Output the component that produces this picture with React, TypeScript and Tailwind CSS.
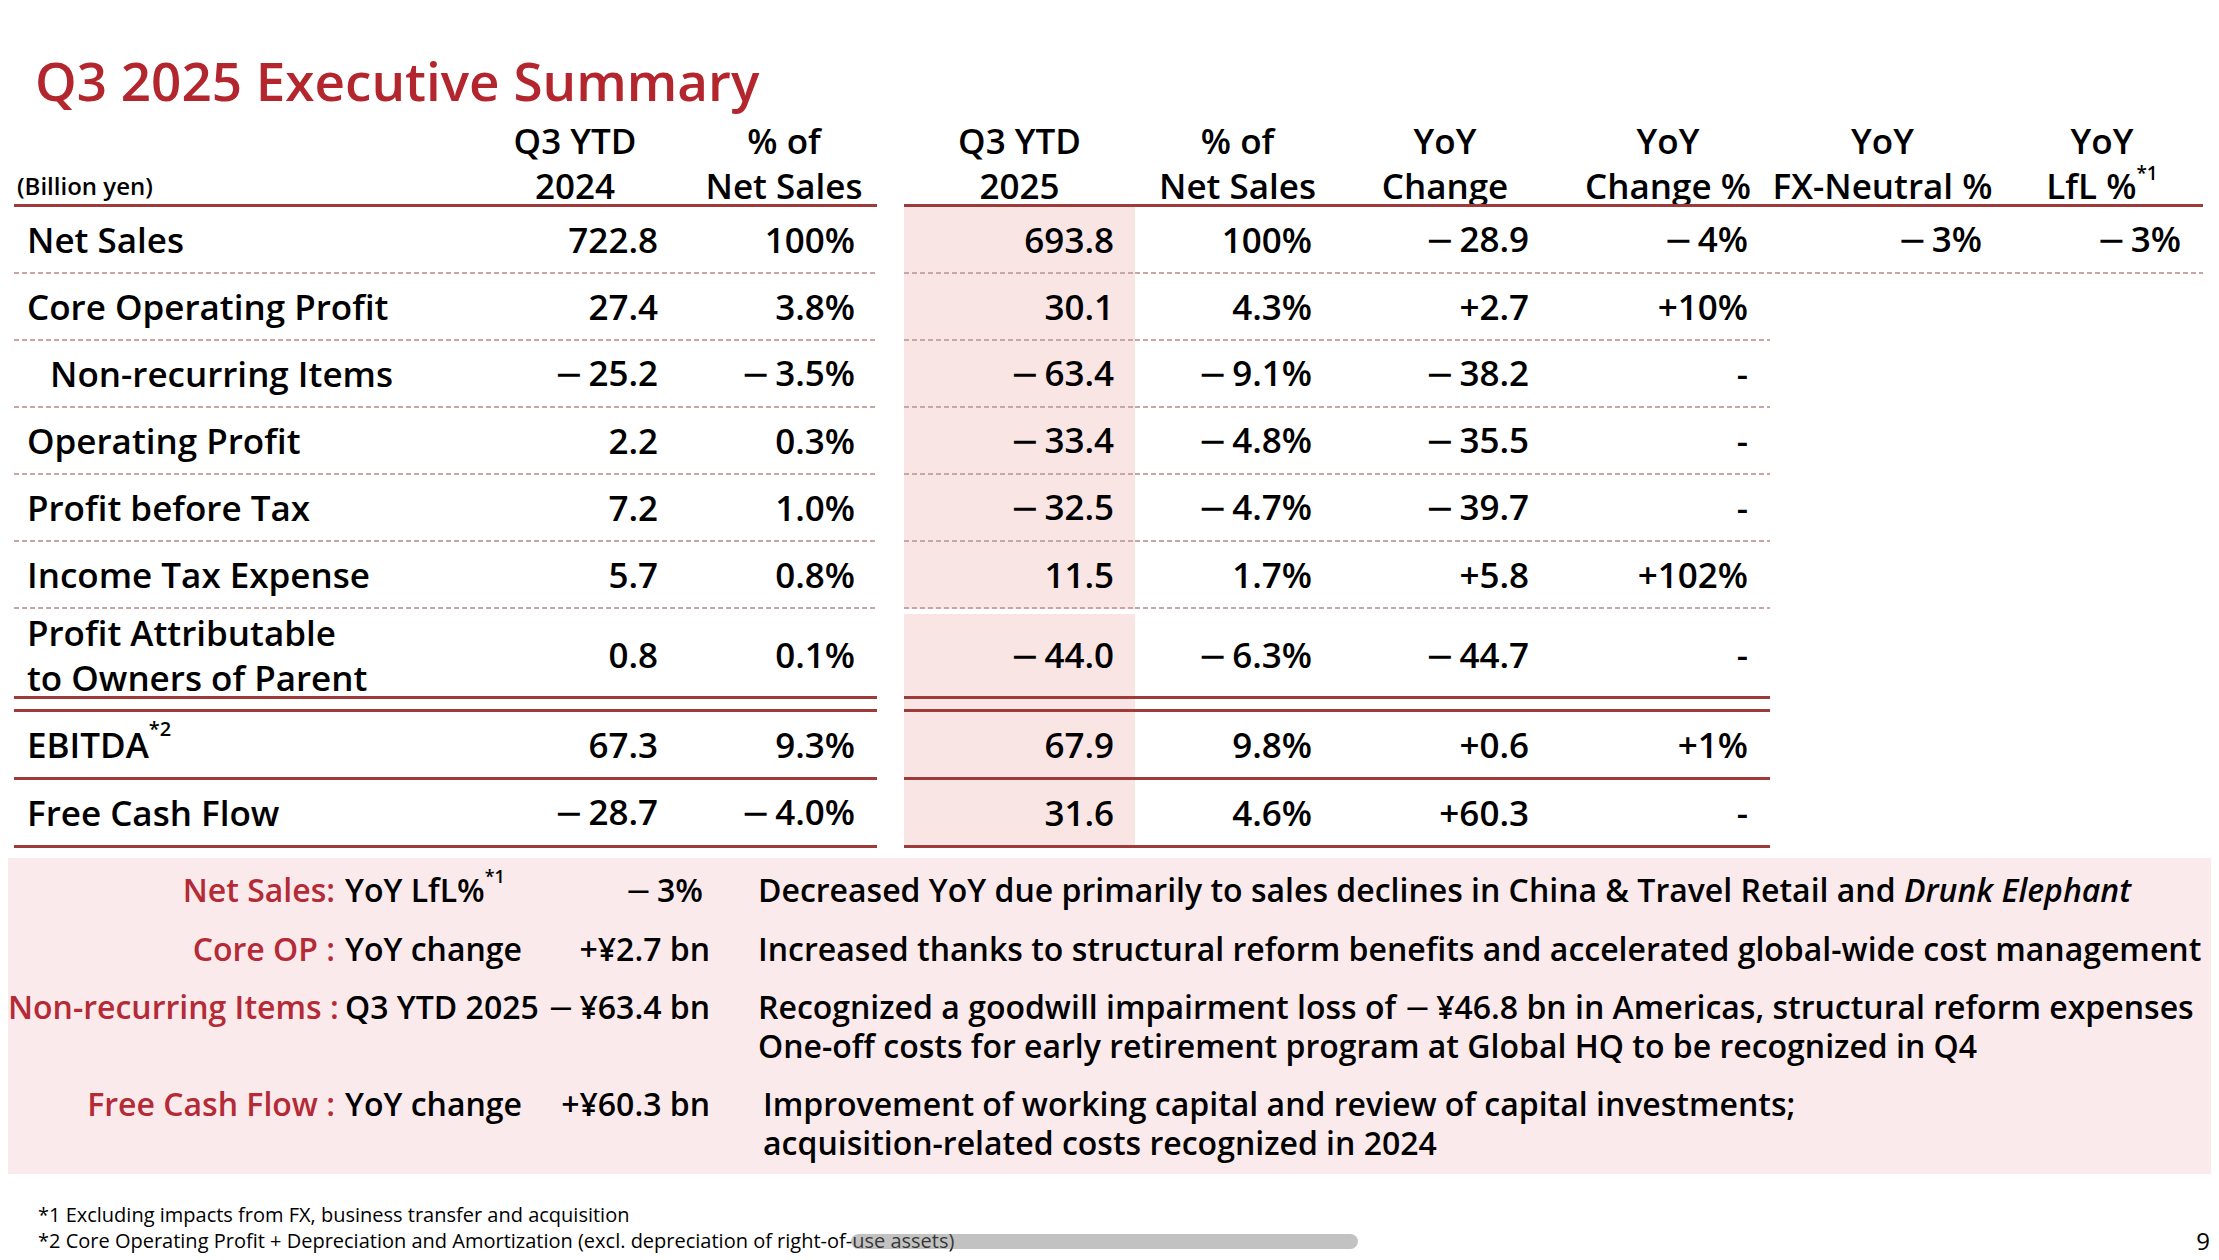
import React from "react";

const dashBg =
  "bg-[repeating-linear-gradient(90deg,#c9a5a5_0px,#c9a5a5_5px,transparent_5px,transparent_8px)]";

function Val({ v }: { v?: string }) {
  if (!v) return null;
  if (v.startsWith("−")) {
    return (
      <>
        <span className="font-['DejaVu_Sans'] font-normal mr-[5px]">−</span>
        {v.slice(1)}
      </>
    );
  }
  return <>{v}</>;
}

type Row = {
  label: React.ReactNode;
  indent?: boolean;
  tall?: boolean;
  a: string;
  b: string;
  c: string;
  d: string;
  e: string;
  f: string;
  g?: string;
  h?: string;
  sep: "dash" | "double" | "solid";
};

const rows: Row[] = [
  { label: "Net Sales", a: "722.8", b: "100%", c: "693.8", d: "100%", e: "−28.9", f: "−4%", g: "−3%", h: "−3%", sep: "dash" },
  { label: "Core Operating Profit", a: "27.4", b: "3.8%", c: "30.1", d: "4.3%", e: "+2.7", f: "+10%", sep: "dash" },
  { label: "Non-recurring Items", indent: true, a: "−25.2", b: "−3.5%", c: "−63.4", d: "−9.1%", e: "−38.2", f: "-", sep: "dash" },
  { label: "Operating Profit", a: "2.2", b: "0.3%", c: "−33.4", d: "−4.8%", e: "−35.5", f: "-", sep: "dash" },
  { label: "Profit before Tax", a: "7.2", b: "1.0%", c: "−32.5", d: "−4.7%", e: "−39.7", f: "-", sep: "dash" },
  { label: "Income Tax Expense", a: "5.7", b: "0.8%", c: "11.5", d: "1.7%", e: "+5.8", f: "+102%", sep: "dash" },
  {
    label: (
      <div className="leading-[45px]">
        <div>Profit Attributable</div>
        <div>to Owners of Parent</div>
      </div>
    ),
    tall: true,
    a: "0.8",
    b: "0.1%",
    c: "−44.0",
    d: "−6.3%",
    e: "−44.7",
    f: "-",
    sep: "double",
  },
  {
    label: (
      <>
        EBITDA<sup className="text-[20px] relative -top-[4px] align-top leading-none">*2</sup>
      </>
    ),
    a: "67.3",
    b: "9.3%",
    c: "67.9",
    d: "9.8%",
    e: "+0.6",
    f: "+1%",
    sep: "solid",
  },
  { label: "Free Cash Flow", a: "−28.7", b: "−4.0%", c: "31.6", d: "4.6%", e: "+60.3", f: "-", sep: "solid" },
];

function rowH(r: Row) {
  return r.tall ? "h-[87px] pt-[5px]" : "h-[65px]";
}

function LeftSep({ kind }: { kind: "dash" | "double" | "solid" }) {
  if (kind === "dash") return <div className={`h-[2px] w-full ${dashBg}`} />;
  if (kind === "solid") return <div className="h-[3px] w-full bg-[#9c3b3a]" />;
  return (
    <div className="flex flex-col">
      <div className="h-[3px] w-full bg-[#9c3b3a]" />
      <div className="h-[10px]" />
      <div className="h-[3px] w-full bg-[#9c3b3a]" />
    </div>
  );
}

function RightSep({ kind, full }: { kind: "dash" | "double" | "solid"; full?: boolean }) {
  const w = full ? "w-[1299px]" : "w-[866px]";
  if (kind === "dash")
    return (
      <div className={`flex h-[2px] ${w}`}>
        <div className={`w-[231px] bg-[#f9e5e4] ${dashBg}`} />
        <div className={`flex-1 ${dashBg}`} />
      </div>
    );
  if (kind === "solid") return <div className={`h-[3px] ${w} bg-[#9c3b3a]`} />;
  return (
    <div className={`flex flex-col ${w}`}>
      <div className="h-[3px] w-full bg-[#9c3b3a]" />
      <div className="flex h-[10px]">
        <div className="w-[231px] bg-[#f9e5e4]" />
        <div className="flex-1" />
      </div>
      <div className="h-[3px] w-full bg-[#9c3b3a]" />
    </div>
  );
}

function HeadCell({ w, l1, l2, extra = "" }: { w: string; l1: string; l2: React.ReactNode; extra?: string }) {
  return (
    <div className={`${w} ${extra} text-center text-[35px] leading-[45px] -mb-[4px] whitespace-nowrap`}>
      <div>{l1}</div>
      <div>{l2}</div>
    </div>
  );
}

function LeftBlock() {
  return (
    <div className="flex flex-col w-[863px] shrink-0">
      <div className="flex items-end h-[95px]">
        <div className="w-[456px] pl-[3px] text-[24px] leading-[45px] -mb-[4px]">(Billion yen)</div>
        <HeadCell w="w-[210px]" l1="Q3 YTD" l2="2024" />
        <HeadCell w="w-[197px]" l1="% of" l2="Net Sales" extra="pl-[11px]" />
      </div>
      <div className="h-[3px] bg-[#9c3b3a]" />
      {rows.map((r, i) => (
        <React.Fragment key={i}>
          <div className={`flex items-center ${rowH(r)} text-[35px] leading-[44px]`}>
            <div className={`w-[456px] ${r.indent ? "pl-[36px]" : "pl-[13px]"}`}>{r.label}</div>
            <div className="w-[210px] pr-[22px] text-right whitespace-nowrap">
              <Val v={r.a} />
            </div>
            <div className="w-[197px] pr-[22px] text-right whitespace-nowrap">
              <Val v={r.b} />
            </div>
          </div>
          <LeftSep kind={r.sep} />
        </React.Fragment>
      ))}
    </div>
  );
}

function RightBlock() {
  return (
    <div className="flex flex-col w-[1299px] shrink-0">
      <div className="flex items-end h-[95px]">
        <HeadCell w="w-[231px]" l1="Q3 YTD" l2="2025" />
        <HeadCell w="w-[205px]" l1="% of" l2="Net Sales" />
        <HeadCell w="w-[210px]" l1="YoY" l2="Change" />
        <HeadCell w="w-[220px]" l1="YoY" l2="Change %" extra="pl-[16px]" />
        <HeadCell w="w-[225px]" l1="YoY" l2="FX-Neutral %" />
        <HeadCell
          w="w-[208px]"
          l1="YoY"
          l2={
            <>
              LfL %<sup className="text-[19px] relative top-[1px] align-top leading-none">*1</sup>
            </>
          }
          extra="pl-[6px]"
        />
      </div>
      <div className="h-[3px] w-[1299px] bg-[#9c3b3a]" />
      {rows.map((r, i) => (
        <React.Fragment key={i}>
          <div className={`flex items-center ${rowH(r)} text-[35px] leading-[44px] ${i === 0 ? "w-[1299px]" : "w-[866px]"}`}>
            <div className="w-[231px] self-stretch flex items-center justify-end pr-[21px] bg-[#f9e5e4] whitespace-nowrap">
              <span>
                <Val v={r.c} />
              </span>
            </div>
            <div className="w-[205px] pr-[28px] text-right whitespace-nowrap">
              <Val v={r.d} />
            </div>
            <div className="w-[210px] pr-[21px] text-right whitespace-nowrap">
              <Val v={r.e} />
            </div>
            <div className="w-[220px] pr-[22px] text-right whitespace-nowrap">
              <Val v={r.f} />
            </div>
            {i === 0 && (
              <>
                <div className="w-[225px] pr-[13px] text-right whitespace-nowrap">
                  <Val v={r.g} />
                </div>
                <div className="w-[208px] pr-[22px] text-right whitespace-nowrap">
                  <Val v={r.h} />
                </div>
              </>
            )}
          </div>
          <RightSep kind={r.sep} full={i === 0} />
        </React.Fragment>
      ))}
    </div>
  );
}

function NoteRow({
  label,
  item,
  value,
  desc,
}: {
  label: React.ReactNode;
  item: React.ReactNode;
  value: React.ReactNode;
  desc: React.ReactNode;
}) {
  return (
    <div className="flex items-start text-[32px] leading-[38px]">
      <div className="w-[327px] text-right text-[#b42a36] whitespace-nowrap">{label}</div>
      <div className="w-[200px] pl-[10px] whitespace-nowrap">{item}</div>
      <div className="w-[175px] text-right whitespace-nowrap">{value}</div>
      <div className="pl-[48px] flex-1 whitespace-nowrap">{desc}</div>
    </div>
  );
}

export default function App() {
  return (
    <div className="w-[2219px] h-[1260px] relative overflow-hidden bg-white text-black font-['Open_Sans','Liberation_Sans',sans-serif] font-semibold">
      <h1 className="pt-[53px] pl-[35px] text-[53px] leading-[56px] font-semibold text-[#b3262e]">
        Q3 2025 Executive Summary
      </h1>

      <div className="flex pl-[14px] gap-[27px]">
        <LeftBlock />
        <RightBlock />
      </div>

      <div className="mt-[10px] mx-[8px] h-[316px] bg-[#fbeaeb] pt-[13px] flex flex-col gap-[20px]">
        <NoteRow
          label="Net Sales:"
          item={
            <>
              YoY LfL%<sup className="text-[18px] relative -top-[4px] align-top leading-none">*1</sup>
            </>
          }
          value={
            <span className="pr-[7px]">
              <Val v="−3%" />
            </span>
          }
          desc={
            <>
              Decreased YoY due primarily to sales declines in China &amp; Travel Retail and <i>Drunk Elephant</i>
            </>
          }
        />
        <NoteRow
          label="Core OP :"
          item="YoY change"
          value="+¥2.7 bn"
          desc="Increased thanks to structural reform benefits and accelerated global-wide cost management"
        />
        <NoteRow
          label="Non-recurring Items :"
          item="Q3 YTD 2025"
          value={<Val v="−¥63.4 bn" />}
          desc={
            <>
              <div>
                Recognized a goodwill impairment loss of <Val v="−¥46.8 bn" /> in Americas, structural reform expenses
              </div>
              <div>One-off costs for early retirement program at Global HQ to be recognized in Q4</div>
            </>
          }
        />
        <NoteRow
          label="Free Cash Flow :"
          item="YoY change"
          value="+¥60.3 bn"
          desc={
            <div className="pl-[5px] flex flex-col gap-[1px]">
              <div>Improvement of working capital and review of capital investments;</div>
              <div>acquisition-related costs recognized in 2024</div>
            </div>
          }
        />
      </div>

      <div className="flex items-end justify-between pl-[38px] pr-[9px] pt-[28px] text-[20px] leading-[26px] font-normal">
        <div>
          <div>*1 Excluding impacts from FX, business transfer and acquisition</div>
          <div>*2 Core Operating Profit + Depreciation and Amortization (excl. depreciation of right-of-use assets)</div>
        </div>
        <div className="text-[24px] leading-[26px]">9</div>
      </div>

      <div className="absolute left-[851px] top-[1234px] w-[507px] h-[15px] rounded-full bg-[rgba(120,120,120,0.45)]" />
    </div>
  );
}
